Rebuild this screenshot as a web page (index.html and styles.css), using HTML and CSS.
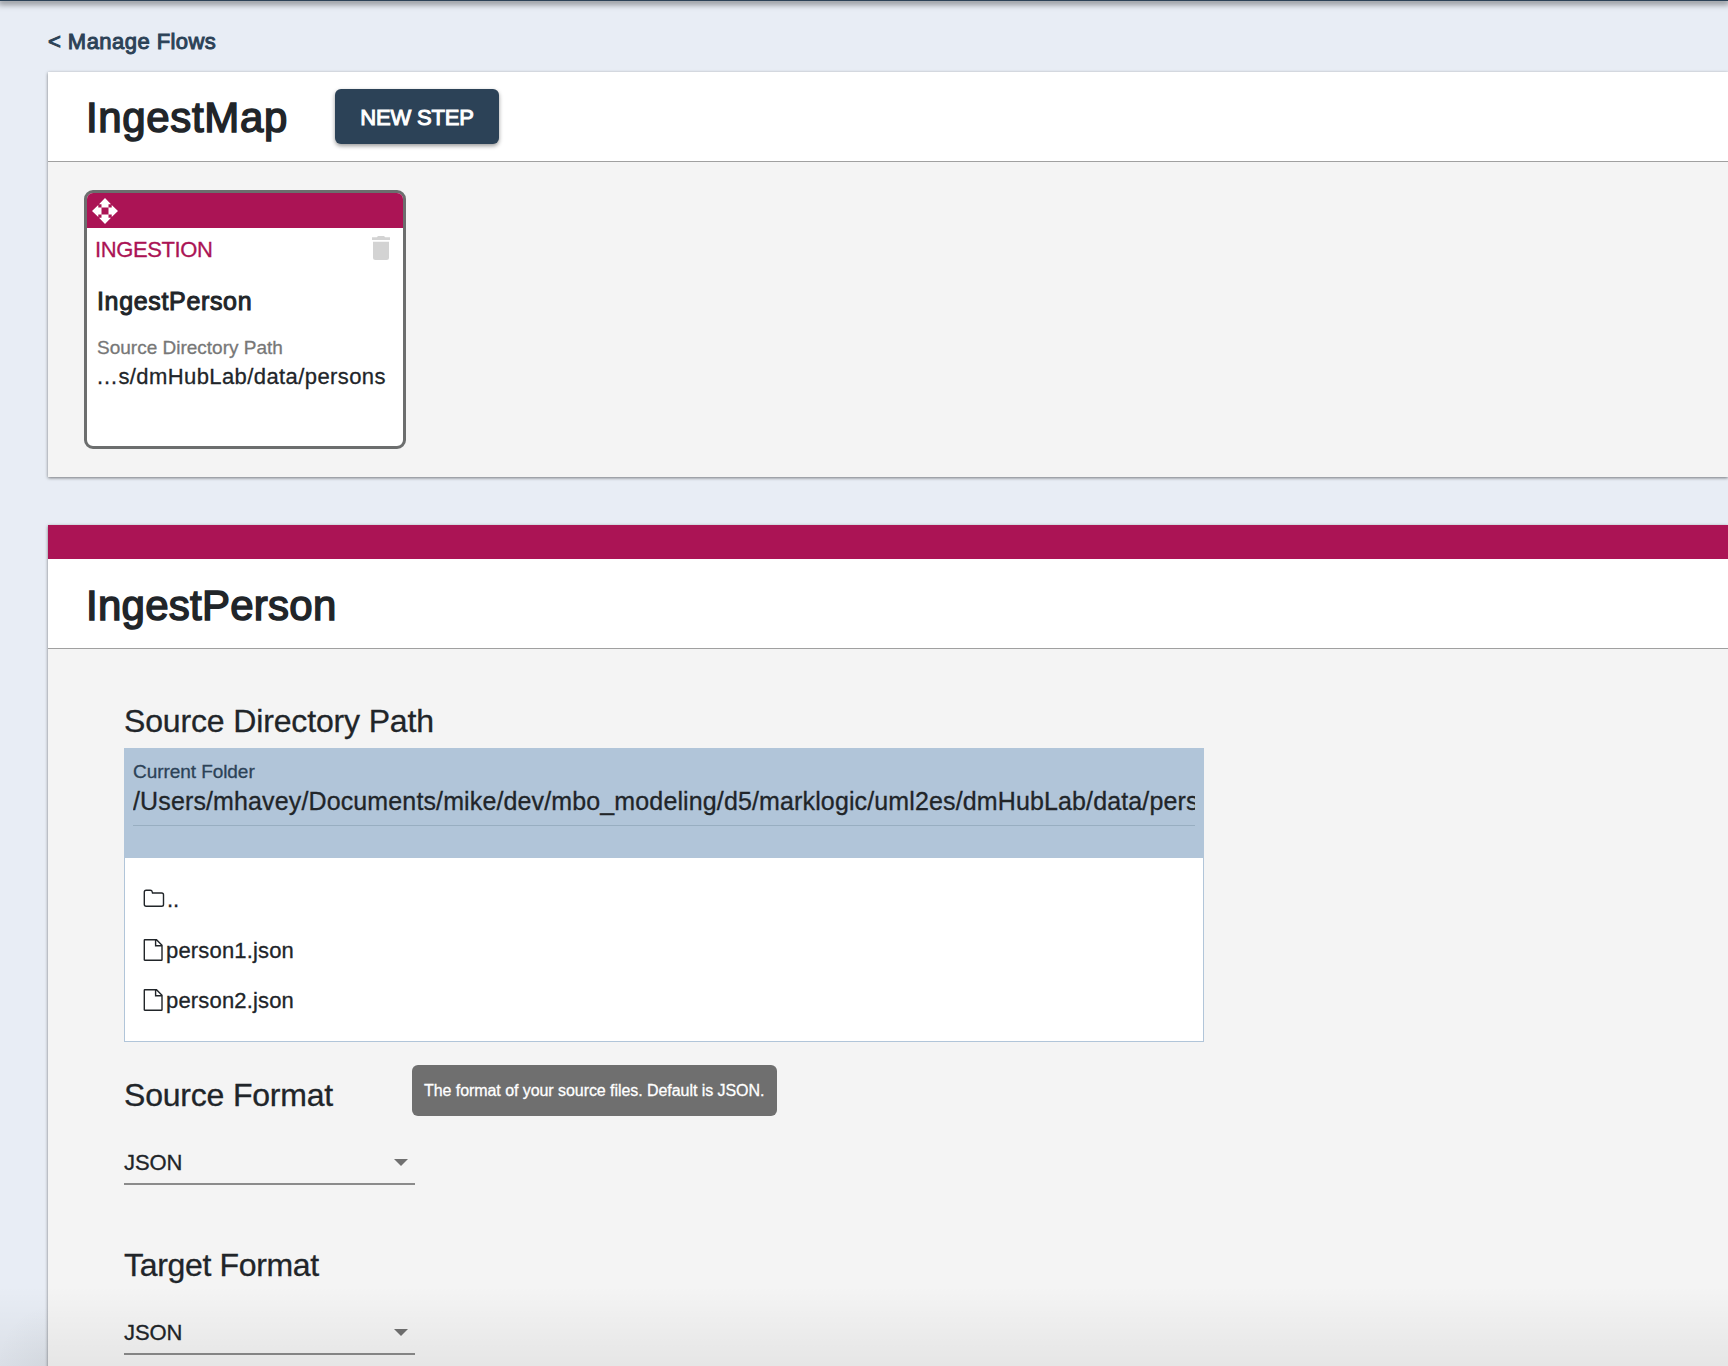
FILE: index.html
```html
<!DOCTYPE html>
<html lang="en">
<head>
<meta charset="utf-8">
<title>IngestMap</title>
<link rel="stylesheet" href="styles.css">
</head>
<body>
<div class="topbar"></div>
<main class="page">
  <a class="back medium">&lt; Manage Flows</a>
  <section class="panel flow">
    <header class="panel-head">
      <h1 class="title flow-title">IngestMap</h1>
      <button class="new-step medium">NEW STEP</button>
    </header>
    <div class="steps">
      <article class="step">
        <div class="step-bar">
          <svg class="move" viewBox="0 0 26 26"><path d="M13 0l6 6.300h-2.500v3.200h-7v-3.200H7zM13 26l-6-6.300h2.500v-3.200h7v3.200H19zM0 13l6.300-6v2.500h3.200v7h-3.200V19zM26 13l-6.300 6v-2.500h-3.200v-7h3.200V7z"/></svg>
        </div>
        <div class="step-type">
          <span class="type">INGESTION</span>
          <svg class="trash" viewBox="0 0 18 24"><path d="M1 5.700h16V21.500q0 2.500-2.500 2.500h-11q-2.500 0-2.500-2.500zM0 1.300h4.800L6 0h6l1.200 1.300H18v2.800H0z"/></svg>
        </div>
        <div class="step-name medium">IngestPerson</div>
        <div class="step-label">Source Directory Path</div>
        <div class="step-path">…s/dmHubLab/data/persons</div>
      </article>
    </div>
  </section>
  <section class="panel detail">
    <div class="stripe"></div>
    <header class="panel-head">
      <h1 class="title step-title">IngestPerson</h1>
    </header>
    <div class="form">
      <h2 class="field-title dir-title">Source Directory Path</h2>
      <div class="browser">
        <div class="folder">
          <div class="folder-label">Current Folder</div>
          <div class="folder-path">/Users/mhavey/Documents/mike/dev/mbo_modeling/d5/marklogic/uml2es/dmHubLab/data/pers</div>
        </div>
        <ul class="files">
          <li><svg class="icon" viewBox="0 0 22 24"><path d="M1.300 16.500V4q0-1.800 1.800-1.800h4.200q1.600 0 1.900 1.500l.3 1.300h9.200q1.800 0 1.800 1.800v9.700q0 1.800-1.800 1.800H3.100q-1.800 0-1.800-1.800z"/></svg><span class="up">..</span></li>
          <li><svg class="icon" viewBox="0 0 22 24"><path d="M1.800 1.700h11.700l5.500 5.600v14.400q0 .5-.5.500H1.800q-.5 0-.5-.5V2.200q0-.5.500-.5zM12.600 1.700v6.100H19"/></svg><span class="file">person1.json</span></li>
          <li><svg class="icon" viewBox="0 0 22 24"><path d="M1.800 1.700h11.700l5.500 5.600v14.400q0 .5-.5.500H1.800q-.5 0-.5-.5V2.200q0-.5.500-.5zM12.600 1.700v6.100H19"/></svg><span class="file">person2.json</span></li>
        </ul>
      </div>
      <div class="format source">
        <h2 class="field-title source-title">Source Format</h2>
        <div class="select"><span class="json">JSON</span><i class="arrow"></i></div>
        <div class="tooltip">The format of your source files. Default is JSON.</div>
      </div>
      <div class="format">
        <h2 class="field-title target-title">Target Format</h2>
        <div class="select"><span class="json">JSON</span><i class="arrow"></i></div>
      </div>
    </div>
  </section>
</main>
<div class="fade"></div>
</body>
</html>
```
FILE: styles.css
```css
* { box-sizing: border-box; }
html, body { height: 1366px; overflow: hidden; }
body {
  margin: 0;
  background: #e8edf5;
  color: #212529;
  font-family: "Liberation Sans", Arial, sans-serif;
  font-size: 22px;
  position: relative;
  -webkit-text-stroke: 0.3px currentColor;
}
h1, h2, ul { margin: 0; padding: 0; font-weight: 400; }
.medium { -webkit-text-stroke: 1px currentColor; }

.topbar { height: 1px; background: #2c4257; box-shadow: 0 1px 6px 2px rgba(0, 0, 0, 0.5); }
.page { padding: 23px 0 0 48px; }
.back { display: block; height: 48px; line-height: 35px; letter-spacing: 0.45px; color: #2c4257; }

.panel { background: #f4f4f4; box-shadow: 0 1px 3px rgba(0, 0, 0, 0.5); }
.flow { height: 405px; }
.panel-head {
  height: 90px;
  padding-left: 36px;
  display: flex;
  align-items: center;
  background: #fff;
  border-bottom: 1px solid #a0a0a0;
}
.title { font-size: 42px; line-height: 50px; padding: 3px 0 0 2px; -webkit-text-stroke: 1.5px currentColor; }
.flow-title { width: 251px; letter-spacing: 0.65px; }
.step-title { padding-top: 5px; letter-spacing: 0.25px; }
.new-step {
  width: 164px;
  height: 55px;
  padding: 2px 0 0;
  border: 0;
  border-radius: 6px;
  background: #2c4257;
  color: #fff;
  font: 22px "Liberation Sans", Arial, sans-serif;
  letter-spacing: -0.15px;
  box-shadow: 0 2px 4px rgba(0, 0, 0, 0.4);
}

.steps { padding: 28px 0 0 36px; }
.step {
  width: 322px;
  height: 259px;
  border: 3px solid #6c6e6e;
  border-radius: 9px;
  background: #fff;
  overflow: hidden;
}
.step-bar { height: 35px; padding: 5px; background: #ab1455; }
.move { display: block; width: 26px; height: 26px; fill: #fff; }
.step-type { display: flex; justify-content: space-between; padding: 8px 13px 0 8px; height: 50px; }
.type { line-height: 28px; letter-spacing: -0.38px; color: #ab1455; }
.trash { width: 18px; height: 24px; fill: #d3d3d3; }
.step-name { padding-left: 10px; font-size: 25px; line-height: 46px; letter-spacing: 0.66px; }
.step-label { padding-left: 10px; font-size: 19px; line-height: 48px; color: #777; }
.step-path { padding-left: 9px; line-height: 10px; letter-spacing: 0.41px; white-space: nowrap; }

.detail { margin-top: 48px; height: 900px; }
.stripe { height: 34px; background: #ab1455; }
.form { padding: 49px 0 0 76px; }
.field-title { height: 50px; font-size: 32px; line-height: 46px; letter-spacing: -0.15px; }
.source-title { letter-spacing: -0.2px; }
.target-title { letter-spacing: -0.33px; }
.browser { width: 1080px; height: 294px; border: 1px solid #b1c5d9; background: #fff; }
.folder { height: 109px; padding: 11px 8px 0; background: #b1c5d9; }
.folder-label { font-size: 19px; line-height: 24px; letter-spacing: -0.06px; color: #2c4257; }
.folder-path {
  height: 42px;
  overflow: hidden;
  white-space: nowrap;
  border-bottom: 1px solid #98aec1;
  font-size: 25px;
  line-height: 34px;
  letter-spacing: 0.13px;
}
.files { padding: 17px 0 0 18px; list-style: none; }
.files li { display: flex; align-items: center; height: 50px; }
.icon { width: 22px; height: 24px; fill: none; stroke: #212529; stroke-width: 1.4; }
.file { padding: 1px 0 0 1px; letter-spacing: 0.17px; }
.up { padding-left: 2px; }

.format { position: relative; width: 291px; height: 170px; }
.source { margin-top: 30px; }
.select {
  margin-top: 24px;
  height: 39px;
  display: flex;
  justify-content: space-between;
  padding-right: 7px;
  border-bottom: 2px solid #8b8b8b;
  line-height: 34px;
  letter-spacing: -0.1px;
}
.arrow { margin-top: 13px; width: 14px; height: 7px; background: #707070; clip-path: polygon(0 0, 100% 0, 50% 100%); }
.tooltip {
  position: absolute;
  left: 288px;
  top: -7px;
  width: 365px;
  height: 51px;
  padding-left: 12px;
  border-radius: 6px;
  background: #6f6f6f;
  color: #fff;
  font-size: 16px;
  line-height: 51px;
  letter-spacing: -0.06px;
  white-space: nowrap;
}
.fade {
  position: absolute;
  left: 0;
  right: 0;
  bottom: 0;
  height: 80px;
  background:
    radial-gradient(50px 60px at 48px 100%, rgba(60, 70, 60, 0.05), transparent) 0 0 / 48px 100% no-repeat,
    linear-gradient(rgba(0, 0, 0, 0), rgba(0, 0, 0, 0.06));
}
```
